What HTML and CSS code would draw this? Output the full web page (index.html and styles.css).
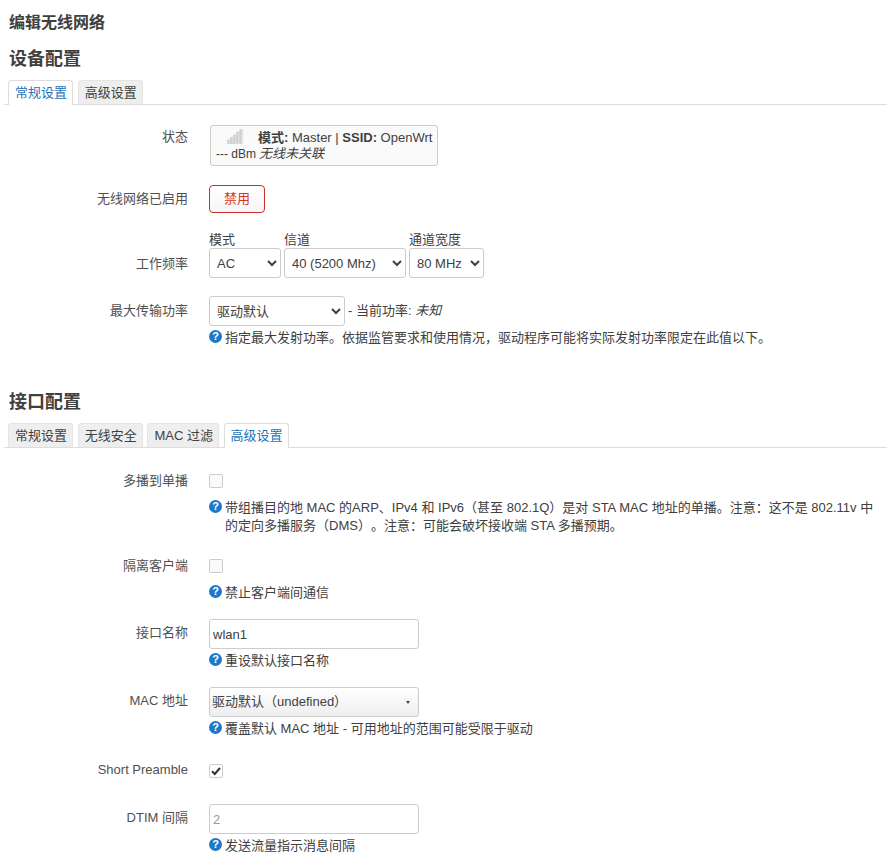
FILE: index.html
```
<!DOCTYPE html>
<html lang="zh-CN">
<head>
<meta charset="utf-8">
<title>编辑无线网络</title>
<link rel="stylesheet" href="styles.css">
</head>
<body>
<h2 class="page-title">编辑无线网络</h2>
<h3 class="section-title">设备配置</h3>
<ul class="tabs">
  <li class="tab active">常规设置</li>
  <li class="tab">高级设置</li>
</ul>
<div class="section section-device">
  <div class="row row-status">
    <div class="label">状态</div>
    <div class="field">
      <div class="status-box">
        <svg class="signal" width="16" height="15" viewBox="0 0 16 15"><defs><linearGradient id="bar" x1="0" y1="0" x2="1" y2="0"><stop offset="0" stop-color="#c4c4c4"/><stop offset="1" stop-color="#ececec"/></linearGradient></defs><g fill="url(#bar)" stroke="#c8c8c8" stroke-width=".5"><rect x=".5" y="11" width="2.4" height="3.7"/><rect x="3.6" y="8.5" width="2.4" height="6.2"/><rect x="6.7" y="6" width="2.4" height="8.7"/><rect x="9.8" y="3" width="2.4" height="11.7"/><rect x="12.9" y=".5" width="2.4" height="14.2"/></g></svg><span><b>模式:</b> Master | <b>SSID:</b> OpenWrt</span><br><span class="dbm">--- dBm</span><i>无线未关联</i>
      </div>
    </div>
  </div>
  <div class="row row-toggle">
    <div class="label">无线网络已启用</div>
    <div class="field"><button class="btn-danger">禁用</button></div>
  </div>
  <div class="row row-freq">
    <div class="label">工作频率</div>
    <div class="field freq">
      <label class="freq-item">模式<select class="sel sel-mode"><option>AC</option></select></label>
      <label class="freq-item">信道<select class="sel sel-chan"><option>40 (5200 Mhz)</option></select></label>
      <label class="freq-item">通道宽度<select class="sel sel-width"><option>80 MHz</option></select></label>
    </div>
  </div>
  <div class="row row-power">
    <div class="label">最大传输功率</div>
    <div class="field">
      <div class="power-line"><select class="sel sel-power"><option>驱动默认</option></select><span>- 当前功率: <i>未知</i></span></div>
      <div class="help"><span class="hint">?</span>指定最大发射功率。依据监管要求和使用情况，驱动程序可能将实际发射功率限定在此值以下。</div>
    </div>
  </div>
</div>
<h3 class="section-title section-title-2">接口配置</h3>
<ul class="tabs">
  <li class="tab">常规设置</li>
  <li class="tab">无线安全</li>
  <li class="tab">MAC 过滤</li>
  <li class="tab active">高级设置</li>
</ul>
<div class="section section-iface">
  <div class="row row-m1">
    <div class="label">多播到单播</div>
    <div class="field">
      <span class="check"></span>
      <div class="help help-check"><span class="hint">?</span>带组播目的地 MAC 的ARP、IPv4 和 IPv6（甚至 802.1Q）是对 STA MAC 地址的单播。注意：这不是 802.11v 中的定向多播服务（DMS）。注意：可能会破坏接收端 STA 多播预期。</div>
    </div>
  </div>
  <div class="row row-m2">
    <div class="label">隔离客户端</div>
    <div class="field">
      <span class="check"></span>
      <div class="help help-check"><span class="hint">?</span>禁止客户端间通信</div>
    </div>
  </div>
  <div class="row row-m3">
    <div class="label">接口名称</div>
    <div class="field">
      <input class="text" type="text" value="wlan1">
      <div class="help"><span class="hint">?</span>重设默认接口名称</div>
    </div>
  </div>
  <div class="row row-m3">
    <div class="label">MAC 地址</div>
    <div class="field">
      <div class="dropdown"><span>驱动默认（undefined）</span><span class="caret"></span></div>
      <div class="help"><span class="hint">?</span>覆盖默认 MAC 地址 - 可用地址的范围可能受限于驱动</div>
    </div>
  </div>
  <div class="row row-m4">
    <div class="label">Short Preamble</div>
    <div class="field">
      <span class="check checked"><svg width="10" height="10" viewBox="0 0 10 10"><path d="M1 5.2 3.8 8 9 2" fill="none" stroke="#333" stroke-width="2"/></svg></span>
    </div>
  </div>
  <div class="row row-m5">
    <div class="label">DTIM 间隔</div>
    <div class="field">
      <input class="text" type="text" placeholder="2">
      <div class="help"><span class="hint">?</span>发送流量指示消息间隔</div>
    </div>
  </div>
</div>
</body>
</html>
```
FILE: styles.css
```
* { box-sizing: border-box; }
html, body { margin: 0; padding: 0; }
body {
  width: 889px;
  height: 866px;
  overflow: hidden;
  background: #fff;
  color: #404040;
  font: 13px/18px "Liberation Sans", "Noto Sans CJK SC", sans-serif;
  padding: 0 2px 0 4px;
  text-spacing-trim: space-all;
}
.page-title {
  margin: 0;
  padding: 12px 0 0 5px;
  font-size: 16px;
  line-height: 22px;
  font-weight: bold;
}
.section-title {
  margin: 0;
  padding: 13px 0 0 5px;
  font-size: 18px;
  line-height: 24px;
  font-weight: bold;
}
.section-title-2 { padding-top: 0; }
.tabs {
  list-style: none;
  margin: 9px 0 0;
  padding: 0 0 0 4px;
  display: flex;
  gap: 4.7px;
  height: 25px;
  border-bottom: 1px solid #ddd;
}
.tab {
  height: 24px;
  padding: 2px 5px 0 6px;
  background: #eee;
  border: 1px solid #e4e4e4;
  border-bottom: 0;
  border-radius: 3px 3px 0 0;
  white-space: nowrap;
  line-height: 20px;
}
.tab.active {
  height: 25px;
  background: #fff;
  color: #1e73b8;
  border-color: #ddd;
}
.row { display: flex; align-items: flex-start; }
.label {
  width: 184px;
  flex: none;
  text-align: right;
  color: #505050;
}
.field { margin-left: 21px; flex: 1; min-width: 0; }
.section-device { padding-top: 20px; height: 285px; }
.row-status .label { padding-top: 3px; }
.status-box {
  width: 228px;
  height: 41px;
  margin-left: 1px;
  border: 1px solid #ccc;
  border-radius: 3px;
  background: #fafafa;
  padding: 3px 0 0 5px;
  line-height: 16px;
  white-space: nowrap;
}
.dbm { font-size: 12px; margin-right: 3px; }
.signal { vertical-align: -2px; margin: 0 15px 0 11px; }
.row-toggle { margin-top: 19px; }
.row-toggle .label { padding-top: 5px; }
.btn-danger {
  width: 56px;
  height: 28px;
  padding: 0;
  border: 1px solid #c9302c;
  border-radius: 4px;
  background: linear-gradient(#fff, #f6f6f6);
  color: #d9341f;
  font: inherit;
}
.row-freq { margin-top: 18px; }
.row-freq .label { padding-top: 24px; }
.freq { display: flex; gap: 3px; }
.freq-item { display: flex; flex-direction: column; line-height: 17px; }
.sel {
  height: 30px;
  border: 1px solid #ccc;
  border-radius: 3px;
  background: #fff;
  color: #404040;
  font: inherit;
  padding: 0 0 0 3px;
}
.sel-mode { width: 72px; }
.sel-chan { width: 122px; }
.sel-width { width: 75px; }
.sel-power { width: 136px; margin-right: 3px; }
.row-power { margin-top: 18px; }
.row-power .label { padding-top: 6px; }
.power-line { display: flex; align-items: center; }
.help {
  padding-left: 16px;
  margin-top: 3px;
  position: relative;
  width: 667px;
  line-height: 18px;
  color: #404040;
}
.hint {
  position: absolute;
  left: 0;
  top: 1px;
  width: 13px;
  height: 13px;
  border-radius: 50%;
  background: #1e78c8;
  color: #fff;
  font-size: 11px;
  font-weight: bold;
  line-height: 13px;
  text-align: center;
}
.section-iface { padding-top: 24px; }
.check {
  display: flex;
  align-items: center;
  justify-content: center;
  width: 14px;
  height: 14px;
  margin-top: 2px;
  border: 1px solid #ccc;
  border-radius: 2px;
  background: #fafafa;
}
.check.checked { background: #fff; margin-top: 3px; }
.help-check { margin-top: 11px; }
.row-m1 { height: 85px; }
.row-m2 { height: 62px; }
.row-m3 { height: 68px; }
.row-m3 .label { padding-top: 5px; }
.row-m4 { height: 49px; padding-top: 6px; }
.row-m5 .label { padding-top: 5px; }
.text {
  display: block;
  width: 210px;
  height: 30px;
  border: 1px solid #ccc;
  border-radius: 3px;
  padding: 0 3px;
  font: inherit;
  color: #404040;
}
.text::placeholder { color: #999; }
.dropdown {
  width: 210px;
  height: 30px;
  border: 1px solid #ccc;
  border-radius: 3px;
  background: linear-gradient(#fff, #eee);
  padding: 0 8px 0 2px;
  display: flex;
  align-items: center;
  justify-content: space-between;
}
.caret {
  width: 0;
  height: 0;
  border: 2.5px solid transparent;
  border-top: 3px solid #444;
  border-bottom: 0;
}
```
